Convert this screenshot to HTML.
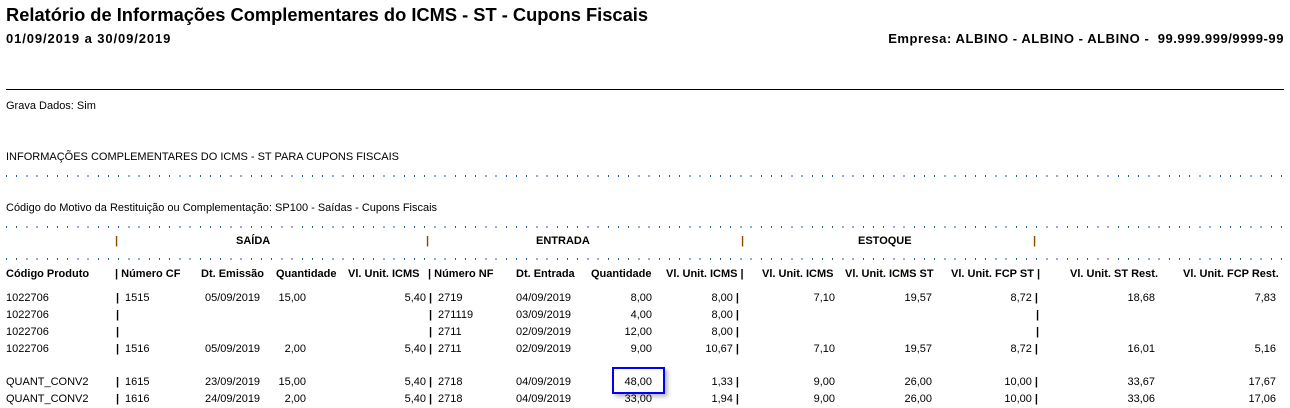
<!DOCTYPE html>
<html><head><meta charset="utf-8"><style>
body{margin:0;width:1290px;height:408px;background:#fff;position:relative;overflow:hidden;font-family:"Liberation Sans",Tahoma,sans-serif;font-size:11px;color:#000}
.a{position:absolute;white-space:nowrap;line-height:13px}
.b{font-weight:bold}
.r{text-align:right}
.dots{position:absolute;left:6px;width:1280px;height:2px;background:repeating-linear-gradient(90deg,#1f5fa8 0 1px,transparent 1px 10.2px)}
.sep{color:#8a4a00;font-weight:bold}
</style></head><body>
<div class="a b" style="left:6px;top:4px;font-size:18.3px;line-height:22px">Relatório de Informações Complementares do ICMS - ST - Cupons Fiscais</div>
<div class="a b" style="left:6px;top:31px;font-size:13px;line-height:15px;letter-spacing:0.9px">01/09/2019 a 30/09/2019</div>
<div class="a b" style="right:6px;top:31px;font-size:13px;line-height:15px;letter-spacing:0.55px">Empresa: ALBINO - ALBINO - ALBINO -&nbsp; 99.999.999/9999-99</div>
<div style="position:absolute;left:6px;top:89px;width:1278px;height:1px;background:#000"></div>
<div class="a" style="left:6px;top:100px">Grava Dados: Sim</div>
<div class="a" style="left:6px;top:151px">INFORMAÇÕES COMPLEMENTARES DO ICMS - ST PARA CUPONS FISCAIS</div>
<div class="dots" style="top:175px"></div>
<div class="a" style="left:6px;top:202px">Código do Motivo da Restituição ou Complementação: SP100 - Saídas - Cupons Fiscais</div>
<div class="dots" style="top:226px"></div>
<div class="a sep" style="left:115px;top:235px">|</div>
<div class="a b" style="left:236px;top:235px">SAÍDA</div>
<div class="a sep" style="left:426px;top:235px">|</div>
<div class="a b" style="left:536px;top:235px">ENTRADA</div>
<div class="a sep" style="left:741px;top:235px">|</div>
<div class="a b" style="left:858px;top:235px">ESTOQUE</div>
<div class="a sep" style="left:1033px;top:235px">|</div>
<div class="dots" style="top:258px"></div>

<div class="a b" style="left:6px;top:268px">Código Produto</div>
<div class="a b" style="left:115px;top:268px">| Número CF</div>
<div class="a b" style="left:201px;top:268px">Dt. Emissão</div>
<div class="a b" style="left:276px;top:268px">Quantidade</div>
<div class="a b" style="left:348px;top:268px">Vl. Unit. ICMS</div>
<div class="a b" style="left:428px;top:268px">| Número NF</div>
<div class="a b" style="left:516px;top:268px">Dt. Entrada</div>
<div class="a b" style="left:591px;top:268px">Quantidade</div>
<div class="a b" style="left:666px;top:268px">Vl. Unit. ICMS |</div>
<div class="a b" style="left:762px;top:268px">Vl. Unit. ICMS</div>
<div class="a b" style="left:845px;top:268px">Vl. Unit. ICMS ST</div>
<div class="a b" style="left:951px;top:268px">Vl. Unit. FCP ST |</div>
<div class="a b" style="left:1070px;top:268px">Vl. Unit. ST Rest.</div>
<div class="a b" style="left:1183px;top:268px">Vl. Unit. FCP Rest.</div>

<div class="a" style="left:6px;top:292px">1022706</div><div class="a b" style="left:116px;top:292px">|</div><div class="a" style="left:125px;top:292px">1515</div><div class="a" style="left:205px;top:292px">05/09/2019</div><div class="a r" style="right:984px;top:292px">15,00</div><div class="a r" style="right:864px;top:292px">5,40</div><div class="a b" style="left:429px;top:292px">|</div><div class="a" style="left:438px;top:292px">2719</div><div class="a" style="left:516px;top:292px">04/09/2019</div><div class="a r" style="right:638px;top:292px">8,00</div><div class="a r" style="right:551px;top:292px">8,00 <b>|</b></div><div class="a r" style="right:455px;top:292px">7,10</div><div class="a r" style="right:358px;top:292px">19,57</div><div class="a r" style="right:252px;top:292px">8,72 <b>|</b></div><div class="a r" style="right:135px;top:292px">18,68</div><div class="a r" style="right:14px;top:292px">7,83</div>

<div class="a" style="left:6px;top:309px">1022706</div><div class="a b" style="left:116px;top:309px">|</div><div class="a b" style="left:429px;top:309px">|</div><div class="a" style="left:438px;top:309px">271119</div><div class="a" style="left:516px;top:309px">03/09/2019</div><div class="a r" style="right:638px;top:309px">4,00</div><div class="a r" style="right:551px;top:309px">8,00 <b>|</b></div><div class="a b" style="left:1036px;top:309px">|</div>

<div class="a" style="left:6px;top:326px">1022706</div><div class="a b" style="left:116px;top:326px">|</div><div class="a b" style="left:429px;top:326px">|</div><div class="a" style="left:438px;top:326px">2711</div><div class="a" style="left:516px;top:326px">02/09/2019</div><div class="a r" style="right:638px;top:326px">12,00</div><div class="a r" style="right:551px;top:326px">8,00 <b>|</b></div><div class="a b" style="left:1036px;top:326px">|</div>

<div class="a" style="left:6px;top:343px">1022706</div><div class="a b" style="left:116px;top:343px">|</div><div class="a" style="left:125px;top:343px">1516</div><div class="a" style="left:205px;top:343px">05/09/2019</div><div class="a r" style="right:984px;top:343px">2,00</div><div class="a r" style="right:864px;top:343px">5,40</div><div class="a b" style="left:429px;top:343px">|</div><div class="a" style="left:438px;top:343px">2711</div><div class="a" style="left:516px;top:343px">02/09/2019</div><div class="a r" style="right:638px;top:343px">9,00</div><div class="a r" style="right:551px;top:343px">10,67 <b>|</b></div><div class="a r" style="right:455px;top:343px">7,10</div><div class="a r" style="right:358px;top:343px">19,57</div><div class="a r" style="right:252px;top:343px">8,72 <b>|</b></div><div class="a r" style="right:135px;top:343px">16,01</div><div class="a r" style="right:14px;top:343px">5,16</div>

<div class="a" style="left:6px;top:376px">QUANT_CONV2</div><div class="a b" style="left:116px;top:376px">|</div><div class="a" style="left:125px;top:376px">1615</div><div class="a" style="left:205px;top:376px">23/09/2019</div><div class="a r" style="right:984px;top:376px">15,00</div><div class="a r" style="right:864px;top:376px">5,40</div><div class="a b" style="left:429px;top:376px">|</div><div class="a" style="left:438px;top:376px">2718</div><div class="a" style="left:516px;top:376px">04/09/2019</div><div class="a r" style="right:638px;top:376px">48,00</div><div class="a r" style="right:551px;top:376px">1,33 <b>|</b></div><div class="a r" style="right:455px;top:376px">9,00</div><div class="a r" style="right:358px;top:376px">26,00</div><div class="a r" style="right:252px;top:376px">10,00 <b>|</b></div><div class="a r" style="right:135px;top:376px">33,67</div><div class="a r" style="right:14px;top:376px">17,67</div>

<div class="a" style="left:6px;top:393px">QUANT_CONV2</div><div class="a b" style="left:116px;top:393px">|</div><div class="a" style="left:125px;top:393px">1616</div><div class="a" style="left:205px;top:393px">24/09/2019</div><div class="a r" style="right:984px;top:393px">2,00</div><div class="a r" style="right:864px;top:393px">5,40</div><div class="a b" style="left:429px;top:393px">|</div><div class="a" style="left:438px;top:393px">2718</div><div class="a" style="left:516px;top:393px">04/09/2019</div><div class="a r" style="right:638px;top:393px">33,00</div><div class="a r" style="right:551px;top:393px">1,94 <b>|</b></div><div class="a r" style="right:455px;top:393px">9,00</div><div class="a r" style="right:358px;top:393px">26,00</div><div class="a r" style="right:252px;top:393px">10,00 <b>|</b></div><div class="a r" style="right:135px;top:393px">33,06</div><div class="a r" style="right:14px;top:393px">17,06</div>

<div style="position:absolute;left:612px;top:367px;width:49px;height:23px;border:2px solid #0000ff;box-shadow:3px 3px 4px rgba(0,0,0,0.25)"></div>
</body></html>
